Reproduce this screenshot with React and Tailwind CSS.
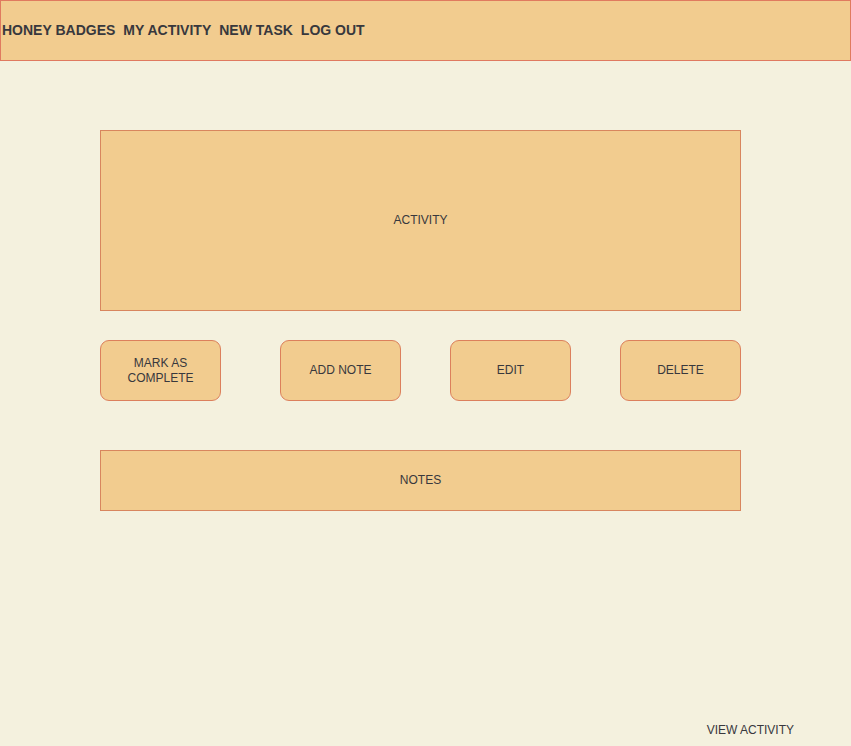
export default function App() {
  const btn =
    "w-[121px] h-[61px] shrink-0 flex items-center justify-center text-center text-[12px] leading-[15px] bg-[#F2CC8F] border border-[#DC805C] rounded-[9px]";
  return (
    <div
      className="w-[851px] h-[746px] bg-[#F4F1DE] text-[#38383d] overflow-hidden"
      style={{ fontFamily: '"Liberation Sans", Arial, sans-serif' }}
    >
      {/* Top nav */}
      <div className="h-[61px] bg-[#F2CC8F] border border-[#E07A5F] flex items-center pl-[1px] gap-[8px] text-[14px] font-bold">
        <span>HONEY BADGES</span>
        <span>MY ACTIVITY</span>
        <span>NEW TASK</span>
        <span>LOG OUT</span>
      </div>

      <div className="pl-[100px] pt-[69px] w-[741px]">
        {/* Activity */}
        <div className="h-[181px] pb-[2px] bg-[#F2CC8F] border border-[#D8865E] flex items-center justify-center text-[12px]">
          ACTIVITY
        </div>

        {/* Actions */}
        <div className="flex mt-[29px]">
          <div className={btn}>
            MARK AS
            <br />
            COMPLETE
          </div>
          <div className={btn + " ml-[59px]"}>ADD NOTE</div>
          <div className={btn + " ml-[49px]"}>EDIT</div>
          <div className={btn + " ml-[49px]"}>DELETE</div>
        </div>

        {/* Notes */}
        <div className="h-[61px] pb-[2px] mt-[49px] bg-[#F2CC8F] border border-[#D8865E] flex items-center justify-center text-[12px]">
          NOTES
        </div>
      </div>

      <div className="flex justify-end pr-[57px] mt-[212px] text-[12px] leading-[14px]">
        VIEW ACTIVITY
      </div>
    </div>
  );
}
